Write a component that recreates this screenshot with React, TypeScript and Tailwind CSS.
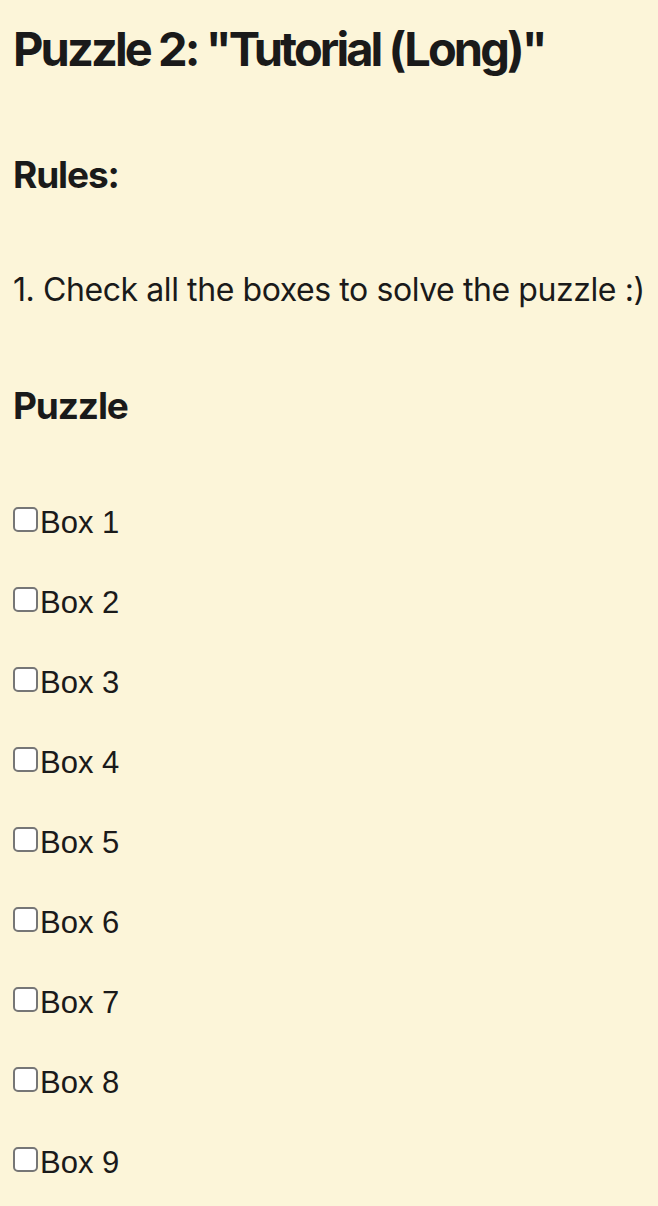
import React from "react";

export default function App() {
  const boxes = [1, 2, 3, 4, 5, 6, 7, 8, 9];
  return (
    <div className="min-h-[1206px] w-full bg-[#fcf5d9] text-[#1a1a1a] pl-[13px] pt-[25px]">
      <h1 className="font-['Inter',sans-serif] font-bold text-[47px] leading-none tracking-[-0.062em]">
        Puzzle 2: "Tutorial (Long)"
      </h1>
      <h2 className="mt-[84px] font-['Inter',sans-serif] font-bold text-[37px] leading-none tracking-[-0.03em]">
        Rules:
      </h2>
      <p className="mt-[81px] font-['Inter',sans-serif] text-[32px] leading-none tracking-[-0.013em]">
        1. Check all the boxes to solve the puzzle :)
      </p>
      <h2 className="mt-[81px] font-['Inter',sans-serif] font-bold text-[37px] leading-none tracking-[-0.03em]">
        Puzzle
      </h2>
      <div className="mt-[83px] flex flex-col gap-[49px]">
        {boxes.map((n) => (
          <label key={n} className="flex items-start font-['Liberation_Sans',Arial,sans-serif] text-[31px] leading-none">
            <input
              type="checkbox"
              className="appearance-none w-[25px] h-[25px] mr-[2px] border-2 border-[#767676] rounded-[5px] bg-white shrink-0"
            />
            <span>Box {n}</span>
          </label>
        ))}
      </div>
    </div>
  );
}
